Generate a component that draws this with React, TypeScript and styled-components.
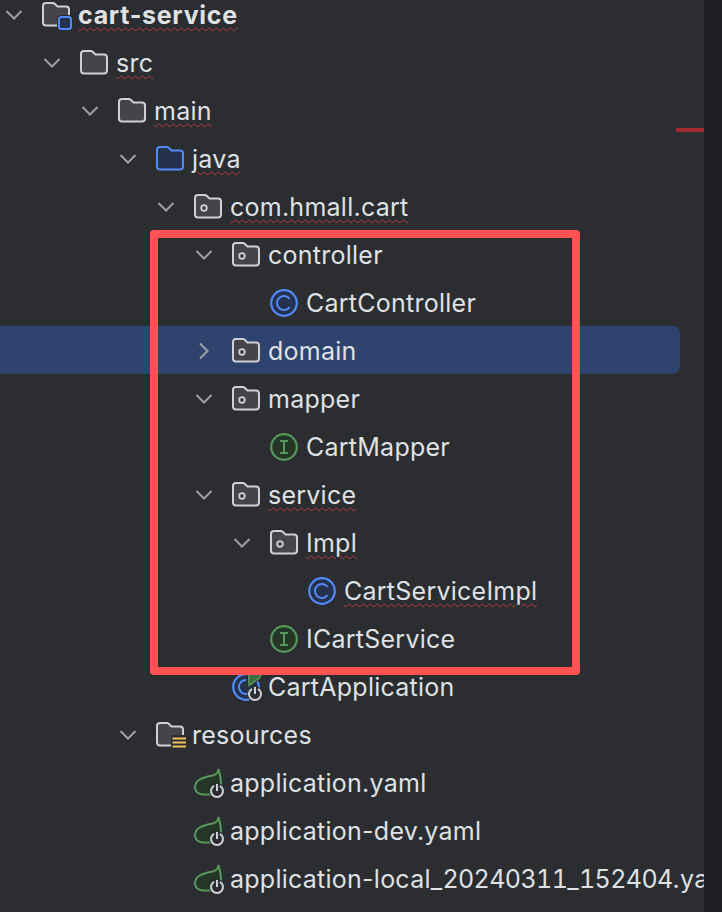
import React from "react";
import styled, { createGlobalStyle } from "styled-components";

const Global = createGlobalStyle`
  html, body { margin: 0; padding: 0; background: #2b2d30; }
  body { width: 722px; height: 912px; overflow: hidden; font-family: Inter, "Noto Sans", sans-serif; }
`;

const Window = styled.div`
  display: flex;
  width: 722px;
  height: 912px;
  overflow: hidden;
  background: #2b2d30;
`;

const Panel = styled.div`
  position: relative;
  flex: 0 0 704px;
  height: 912px;
  overflow: hidden;
`;

const Strip = styled.div`
  flex: 1;
  background: #1e1f22;
`;

const Tree = styled.div`
  display: flex;
  flex-direction: column;
  margin-top: -9px;
  padding-right: 24px;
`;

const Row = styled.div<{ $level: number; $selected?: boolean }>`
  position: relative;
  z-index: 0;
  display: flex;
  align-items: center;
  height: 48px;
  flex: 0 0 48px;
  padding-left: ${(p) => 4 + p.$level * 38}px;
  &::before {
    content: "";
    position: absolute;
    z-index: -1;
    left: 0;
    right: 0;
    top: -1px;
    height: 48px;
    border-radius: 0 8px 8px 0;
    background: ${(p) => (p.$selected ? "#2e436e" : "transparent")};
  }
`;

const ChevronSlot = styled.span`
  display: flex;
  align-items: center;
  justify-content: center;
  flex: 0 0 20px;
  height: 20px;
  margin-right: 18px;
`;

const IconSlot = styled.span`
  display: flex;
  flex: 0 0 28px;
  width: 28px;
  height: 28px;
  margin-right: 8px;
`;

const Label = styled.span<{ $bold?: boolean; $typo?: boolean }>`
  font-size: 25px;
  line-height: 48px;
  white-space: nowrap;
  color: #dfe1e5;
  font-weight: ${(p) => (p.$bold ? 700 : 400)};
  letter-spacing: ${(p) => (p.$bold ? "0.7px" : "0.25px")};
  text-decoration: ${(p) => (p.$typo ? "underline wavy #b43c3c" : "none")};
  text-decoration-thickness: 1.4px;
  text-underline-offset: 3px;
`;

const Digits = styled.span`
  font-variant-numeric: tabular-nums;
  letter-spacing: -0.6px;
`;

const Highlight = styled.div`
  position: absolute;
  left: 150px;
  top: 230px;
  width: 430px;
  height: 445px;
  box-sizing: border-box;
  border: 8px solid #ff5252;
  border-radius: 4px;
  pointer-events: none;
`;

const ErrorMark = styled.div`
  position: absolute;
  right: 0;
  top: 128px;
  width: 28px;
  height: 4px;
  background: #a32b2b;
`;

const Svg = styled.svg`
  display: block;
  overflow: visible;
`;

const Chevron = ({ open }: { open: boolean }) => (
  <Svg width="20" height="20" viewBox="0 0 20 20" fill="none" stroke="#9da0a8" strokeWidth="2">
    {open ? <path d="M2.5 6 L10 13.5 L17.5 6" /> : <path d="M6 2.5 L13.5 10 L6 17.5" />}
  </Svg>
);

const FOLDER =
  "M4 2h7a2 2 0 0 1 1.4.6L15.5 5.5H24a3 3 0 0 1 3 3V21.5a3 3 0 0 1-3 3H4a3 3 0 0 1-3-3V5a3 3 0 0 1 3-3z";

const Folder = ({ stroke = "#ced0d6", fill = "#43454a", children }: { stroke?: string; fill?: string; children?: React.ReactNode }) => (
  <Svg width="28" height="28" viewBox="0 0 28 28">
    <path d={FOLDER} fill={fill} stroke={stroke} strokeWidth="2" />
    {children}
  </Svg>
);

const PackageFolder = () => (
  <Folder>
    <circle cx="10" cy="15" r="2.8" fill="none" stroke="#ced0d6" strokeWidth="1.8" />
  </Folder>
);

const ModuleFolder = () => (
  <Folder>
    <rect x="15" y="14" width="16" height="16" rx="4" fill="#2b2d30" />
    <rect x="17" y="16" width="12" height="12" rx="2.5" fill="#25324d" stroke="#548af7" strokeWidth="2" />
  </Folder>
);

const ResourcesFolder = () => (
  <Folder>
    <rect x="15" y="14" width="16" height="15" rx="2" fill="#2b2d30" />
    <path d="M16.5 17.5H30M16.5 21.5H30M16.5 25.5H30" stroke="#f2c55c" strokeWidth="2.2" />
  </Folder>
);

const Badge = ({ stroke, fill, children }: { stroke: string; fill: string; children: React.ReactNode }) => (
  <Svg width="28" height="28" viewBox="0 0 28 28">
    <circle cx="14" cy="14" r="12.8" fill={fill} stroke={stroke} strokeWidth="2.2" />
    {children}
  </Svg>
);

const ClassIcon = () => (
  <Badge stroke="#548af7" fill="#25324d">
    <path d="M19.6 9.8a7 7 0 1 0 0 8.4" fill="none" stroke="#548af7" strokeWidth="2" />
  </Badge>
);

const InterfaceIcon = () => (
  <Badge stroke="#57965c" fill="#253627">
    <path d="M10 8h8M10 20h8M14 8v12" fill="none" stroke="#57965c" strokeWidth="2" />
  </Badge>
);

const Power = ({ cx, cy }: { cx: number; cy: number }) => (
  <g>
    <circle cx={cx} cy={cy} r="7.8" fill="#2b2d30" />
    <path
      d={`M${cx - 3} ${cy - 5.2}a6 6 0 1 0 6 0`}
      fill="none"
      stroke="#ced0d6"
      strokeWidth="2"
    />
    <path d={`M${cx} ${cy - 7}v7`} stroke="#ced0d6" strokeWidth="2" />
  </g>
);

const SpringIcon = () => (
  <Svg width="28" height="28" viewBox="0 0 28 28">
    <path
      d="M24.5 0C24 3 23 5 20 6C13 8 1 9 1 18C1 23 5 25.5 10 25.5H17C24 25 27 18 27 14C27 8 25.5 4 24.5 0Z"
      fill="#253627"
      stroke="#57965c"
      strokeWidth="2"
    />
    <Power cx={23} cy={22} />
  </Svg>
);

const BootClassIcon = () => (
  <Svg width="28" height="28" viewBox="0 0 28 28">
    <circle cx="14" cy="14" r="12.8" fill="#25324d" stroke="#548af7" strokeWidth="2.2" />
    <path d="M19.6 9.8a7 7 0 1 0 0 8.4" fill="none" stroke="#548af7" strokeWidth="2" />
    <path d="M14 -2H32L29 6L18 14L14 11Z" fill="#2b2d30" />
    <path d="M16.5 0H30L27.5 5L17 12.5Z" fill="#3c6e43" stroke="#57965c" strokeWidth="1.5" />
    <Power cx={23} cy={21} />
  </Svg>
);

type Item = {
  level: number;
  text: string;
  icon: React.ReactNode;
  chevron?: "open" | "closed";
  bold?: boolean;
  typo?: boolean;
  selected?: boolean;
};

const items: Item[] = [
  { level: 0, text: "cart-service", icon: <ModuleFolder />, chevron: "open", bold: true, typo: true },
  { level: 1, text: "src", icon: <Folder />, chevron: "open", typo: true },
  { level: 2, text: "main", icon: <Folder />, chevron: "open", typo: true },
  { level: 3, text: "java", icon: <Folder stroke="#548af7" fill="#25324d" />, chevron: "open", typo: true },
  { level: 4, text: "com.hmall.cart", icon: <PackageFolder />, chevron: "open", typo: true },
  { level: 5, text: "controller", icon: <PackageFolder />, chevron: "open" },
  { level: 6, text: "CartController", icon: <ClassIcon /> },
  { level: 5, text: "domain", icon: <PackageFolder />, chevron: "closed", selected: true },
  { level: 5, text: "mapper", icon: <PackageFolder />, chevron: "open" },
  { level: 6, text: "CartMapper", icon: <InterfaceIcon /> },
  { level: 5, text: "service", icon: <PackageFolder />, chevron: "open", typo: true },
  { level: 6, text: "Impl", icon: <PackageFolder />, chevron: "open", typo: true },
  { level: 7, text: "CartServiceImpl", icon: <ClassIcon />, typo: true },
  { level: 6, text: "ICartService", icon: <InterfaceIcon /> },
  { level: 5, text: "CartApplication", icon: <BootClassIcon /> },
  { level: 3, text: "resources", icon: <ResourcesFolder />, chevron: "open" },
  { level: 4, text: "application.yaml", icon: <SpringIcon /> },
  { level: 4, text: "application-dev.yaml", icon: <SpringIcon /> },
  { level: 4, text: "application-local_20240311_152404.yaml", icon: <SpringIcon /> },
];

const withDigits = (text: string) =>
  text.split(/(\d+)/).map((part, i) => (i % 2 ? <Digits key={i}>{part}</Digits> : part));

export default function App() {
  return (
    <Window>
      <Global />
      <Panel>
        <Tree>
          {items.map((item) => (
            <Row key={item.text} $level={item.level} $selected={item.selected}>
              <ChevronSlot>{item.chevron && <Chevron open={item.chevron === "open"} />}</ChevronSlot>
              <IconSlot>{item.icon}</IconSlot>
              <Label $bold={item.bold} $typo={item.typo}>
                {withDigits(item.text)}
              </Label>
            </Row>
          ))}
        </Tree>
        <Highlight />
        <ErrorMark />
      </Panel>
      <Strip />
    </Window>
  );
}
